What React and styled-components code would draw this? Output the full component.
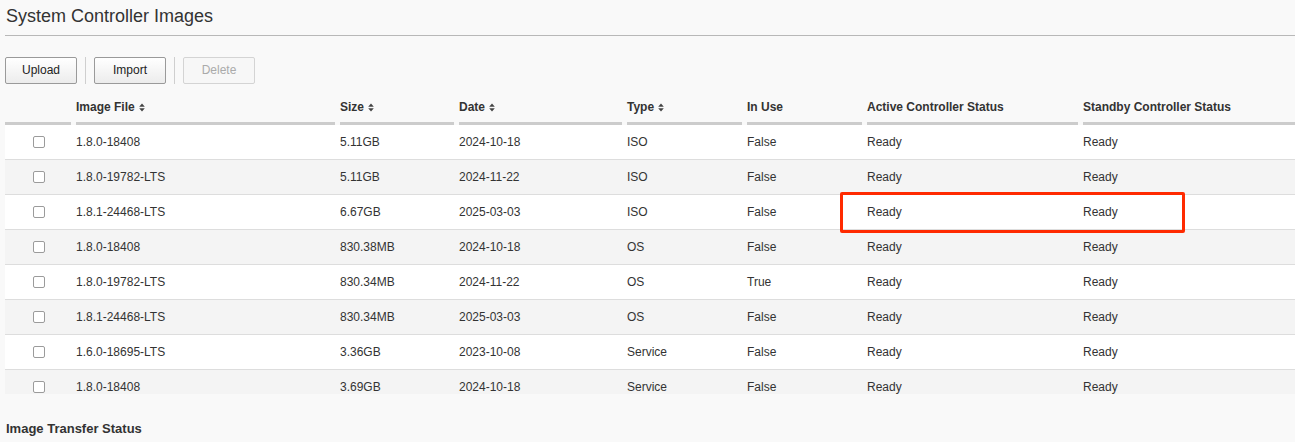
import React from "react";
import styled, { createGlobalStyle } from "styled-components";

const Global = createGlobalStyle`
  html, body { margin: 0; padding: 0; background: #f9f9f9; }
  body { font-family: "Liberation Sans", Arial, Helvetica, sans-serif; color: #333; }
  * { box-sizing: border-box; }
`;

const Page = styled.div`
  padding: 0 0 0 5px;
  width: 1295px;
  height: 442px;
  overflow: hidden;
`;

const Title = styled.h1`
  margin: 0;
  padding: 5px 0 8px 1px;
  font-size: 18px;
  line-height: 22px;
  font-weight: normal;
  color: #333;
  border-bottom: 1px solid #b8b8b8;
`;

const Toolbar = styled.div`
  display: flex;
  align-items: center;
  gap: 8px;
  margin-top: 21px;
  height: 27px;
`;

const Button = styled.button`
  width: 72px;
  height: 27px;
  font-family: inherit;
  font-size: 12px;
  line-height: 14px;
  color: ${(p) => (p.disabled ? "#aaa" : "#222")};
  background: ${(p) =>
    p.disabled ? "#f7f7f7" : "linear-gradient(#ffffff, #ececec)"};
  border: 1px solid ${(p) => (p.disabled ? "#d4d4d4" : "#9a9a9a")};
  border-radius: 2px;
  padding: 0 0 1px;
`;

const Separator = styled.span`
  width: 1px;
  height: 27px;
  background: #cfcfcf;
`;

const cols = "66px 259px 114px 163px 115px 115px 211px 1fr";

const HeaderRow = styled.div`
  display: grid;
  grid-template-columns: ${cols};
  column-gap: 5px;
  margin-top: 10px;
`;

const HeaderCell = styled.div`
  display: flex;
  align-items: center;
  gap: 4px;
  padding: 5px 0 7px;
  line-height: 16px;
  font-size: 12px;
  font-weight: bold;
  color: #333;
  border-bottom: 3px solid #cccccc;
`;

const BodyWrap = styled.div`
  position: relative;
  height: 269px;
  overflow: hidden;
`;

const Row = styled.div`
  display: grid;
  grid-template-columns: ${cols};
  column-gap: 5px;
  align-items: center;
  height: 35px;
  padding-bottom: 1px;
  border-bottom: 1px solid #dddddd;
  background: ${(p) => (p.$alt ? "#f4f4f4" : "#ffffff")};
  font-size: 12px;
  color: #333;
`;

const Cell = styled.div`
  white-space: nowrap;
`;

const CheckCell = styled.div`
  display: flex;
  justify-content: center;
  padding-left: 2px;
`;

const Check = styled.input.attrs({ type: "checkbox" })`
  appearance: none;
  margin: 0;
  width: 12px;
  height: 12px;
  border: 1px solid #9b9b9b;
  border-radius: 2px;
  background: #fff;
`;

const Highlight = styled.div`
  position: absolute;
  left: 835px;
  top: 67px;
  width: 345px;
  height: 41px;
  border: 3px solid #ff2a00;
  border-radius: 2px;
  pointer-events: none;
`;

const SubTitle = styled.div`
  margin-top: 27px;
  padding-left: 1px;
  font-size: 13px;
  line-height: 16px;
  font-weight: bold;
  color: #333;
`;

const SortIcon = () => (
  <svg width="6" height="9" viewBox="0 0 6 9">
    <path d="M3 0.5 L5.8 3.8 L0.2 3.8 Z" fill="#444" />
    <path d="M3 8.5 L5.8 5.2 L0.2 5.2 Z" fill="#444" />
  </svg>
);

const headers = [
  { label: "", sort: false },
  { label: "Image File", sort: true },
  { label: "Size", sort: true },
  { label: "Date", sort: true },
  { label: "Type", sort: true },
  { label: "In Use", sort: false },
  { label: "Active Controller Status", sort: false },
  { label: "Standby Controller Status", sort: false },
];

const rows = [
  ["1.8.0-18408", "5.11GB", "2024-10-18", "ISO", "False"],
  ["1.8.0-19782-LTS", "5.11GB", "2024-11-22", "ISO", "False"],
  ["1.8.1-24468-LTS", "6.67GB", "2025-03-03", "ISO", "False"],
  ["1.8.0-18408", "830.38MB", "2024-10-18", "OS", "False"],
  ["1.8.0-19782-LTS", "830.34MB", "2024-11-22", "OS", "True"],
  ["1.8.1-24468-LTS", "830.34MB", "2025-03-03", "OS", "False"],
  ["1.6.0-18695-LTS", "3.36GB", "2023-10-08", "Service", "False"],
  ["1.8.0-18408", "3.69GB", "2024-10-18", "Service", "False"],
];

export default function App() {
  return (
    <>
      <Global />
      <Page>
        <Title>System Controller Images</Title>
        <Toolbar>
          <Button>Upload</Button>
          <Separator />
          <Button>Import</Button>
          <Separator />
          <Button disabled>Delete</Button>
        </Toolbar>
        <HeaderRow>
          {headers.map((h, i) => (
            <HeaderCell key={i}>
              {h.label}
              {h.sort && <SortIcon />}
            </HeaderCell>
          ))}
        </HeaderRow>
        <BodyWrap>
          {rows.map((r, i) => (
            <Row key={i} $alt={i % 2 === 1}>
              <CheckCell>
                <Check />
              </CheckCell>
              {r.map((v, j) => (
                <Cell key={j}>{v}</Cell>
              ))}
              <Cell>Ready</Cell>
              <Cell>Ready</Cell>
            </Row>
          ))}
          <Highlight />
        </BodyWrap>
        <SubTitle>Image Transfer Status</SubTitle>
      </Page>
    </>
  );
}
